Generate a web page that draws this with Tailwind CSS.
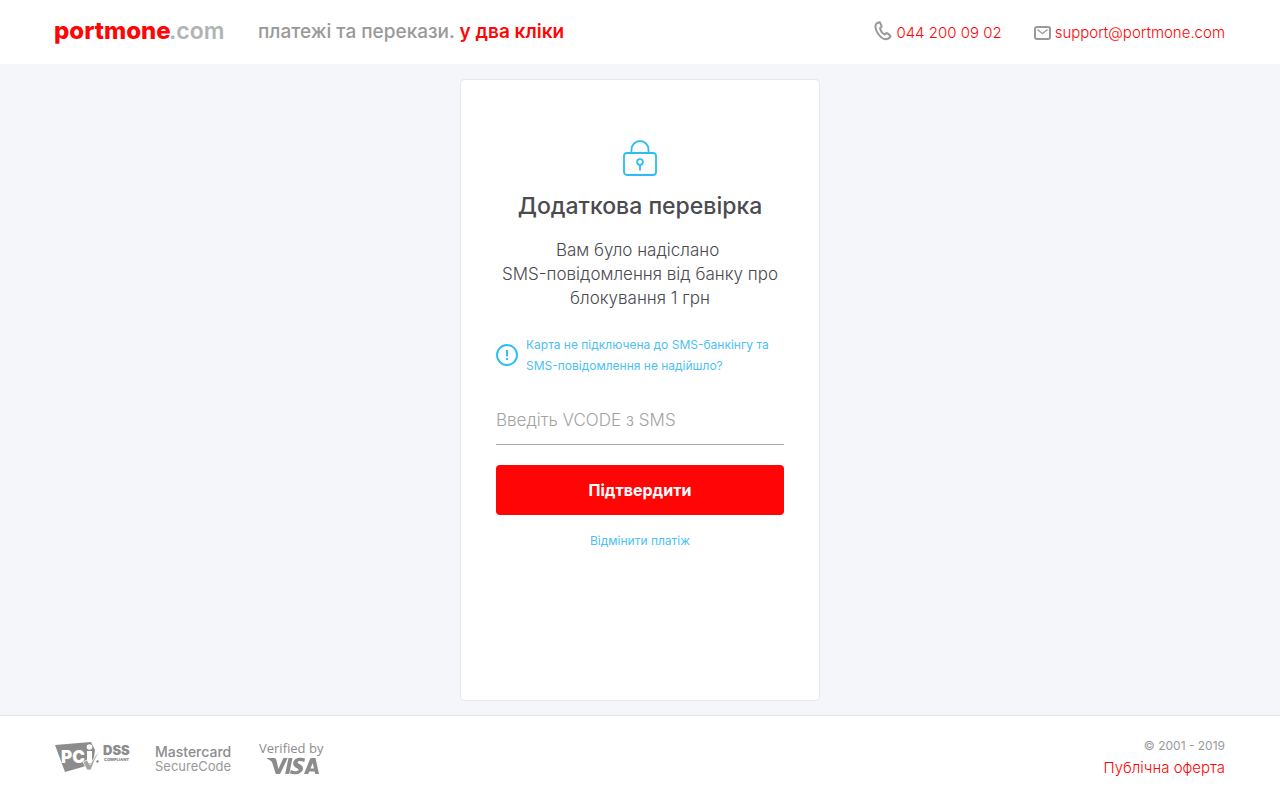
<!DOCTYPE html>
<html lang="uk">

<head>
    <meta charset="UTF-8">
    <meta name="viewport" content="width=device-width, initial-scale=1.0">
    <title>Portmone.com | Додаткова перевірка</title>
    <script src="https://cdn.jsdelivr.net/npm/@tailwindcss/browser@4"></script>
</head>

<body class="bg-[#f4f6fa] text-[#4a4a4f] min-h-screen flex flex-col font-['Inter',sans-serif]">
    <!-- Header -->
    <header class="bg-white h-16">
        <div class="max-w-[1170px] h-full mx-auto flex items-center justify-between">
            <div class="flex items-center gap-8">
                <a href="#" aria-label="portmone.com">
                    <svg class="block" width="171" height="30" viewBox="0 0 171 30" font-family="Inter, sans-serif" font-size="24">
                        <text x="-1" y="22" font-weight="800" fill="#ff0505">portmone</text>
                        <text x="114" y="22" font-size="23" font-weight="600" fill="#b2b3b3">.com</text>
                    </svg>
                </a>
                <p class="text-[19px] font-medium text-[#999]">платежі та перекази. <span class="font-semibold text-[#ff0505]">у два кліки</span></p>
            </div>
            <div class="flex items-center gap-8 pt-0.5 text-[15px] font-light text-[#ff0505]">
                <a href="tel:0442000902" class="flex items-center gap-1">
                    <svg class="mb-1" width="18" height="20" viewBox="0 0 18 20" fill="none" stroke="#999" stroke-width="2" stroke-linejoin="round">
                        <path d="M4.800 1.300 2.600 2.500C.7 4 1.300 8.200 3.500 11.700c2.500 4 5.600 6.500 8.300 6.600 1.300 0 2.700-.6 4.200-2.100.7-.7.7-1.200 0-1.800l-2.500-2c-.6-.5-1.200-.4-1.700.1l-1 1C8.700 12.600 6.600 9.700 6 7.300l1-.8c.6-.5.8-1 .4-1.700L6.200 1.900c-.3-.7-.8-.9-1.400-.6Z" />
                    </svg>
                    044 200 09 02
                </a>
                <a href="mailto:support@portmone.com" class="flex items-center gap-1">
                    <svg width="17" height="14" viewBox="0 0 17 14" fill="none" stroke="#999" stroke-width="2">
                        <rect x="1" y="1" width="15" height="12" rx="2" />
                        <path d="m3.500 3.500 5 4.200 5-4.200" stroke-width="1.400" />
                    </svg>
                    support@portmone.com
                </a>
            </div>
        </div>
    </header>

    <!-- Verification card -->
    <main class="flex-1 flex justify-center pt-[15px] pb-[14px]">
        <form class="w-[360px] min-h-[622px] bg-white border border-[#e4e6eb] rounded px-[35px] pt-[60px] flex flex-col items-center">
            <svg width="36" height="38" viewBox="0 0 36 38" fill="none" stroke="#2bbdf5" stroke-width="1.800">
                <rect x="2" y="13" width="32" height="22" rx="3" />
                <path d="M9.500 13V9.500a8.500 8.500 0 0 1 17 0V13" />
                <circle cx="18" cy="22" r="2.900" />
                <path d="M18 25v5.500" />
            </svg>
            <h1 class="mt-3 text-[23px] leading-8 font-medium whitespace-nowrap">Додаткова перевірка</h1>
            <p class="mt-4 text-[17px] leading-6 font-light text-center whitespace-nowrap">Вам було надіслано&nbsp;<br>SMS-повідомлення від банку про<br>блокування 1 грн</p>
            <a href="#" class="mt-6 w-full flex items-center gap-2 text-xs leading-[21px] text-[#4dbff5] whitespace-nowrap">
                <svg class="shrink-0" width="22" height="22" viewBox="0 0 22 22" fill="none" stroke="#2bbdf5" stroke-width="1.900">
                    <circle cx="11" cy="11" r="10" />
                    <path d="M11 6v6.500M11 14v2" />
                </svg>
                <span>Карта не підключена до SMS-банкінгу та<br>SMS-повідомлення не надійшло?</span>
            </a>
            <input type="text" aria-label="Введіть VCODE з SMS" placeholder="Введіть VCODE з SMS" class="mt-5 w-full h-[49px] border-b border-[#a9a9a9] text-[17px] font-light placeholder:text-[#a3a3a3] outline-none">
            <button type="submit" class="mt-5 w-full h-[50px] rounded bg-[#ff0505] text-white text-base font-bold">Підтвердити</button>
            <a href="#" class="mt-4 text-xs leading-5 text-[#4dbff5]">Відмінити платіж</a>
        </form>
    </main>

    <!-- Footer -->
    <footer class="bg-white border-t border-[#e2e4ea]">
        <div class="max-w-[1170px] h-[84px] mx-auto flex items-center justify-between">
            <div class="flex items-center gap-6">
                <svg width="76" height="34" viewBox="0 0 76 34" fill="#8c8c8c" role="img" aria-label="PCI DSS Compliant">
                    <path d="M0 4 36 1l4 8-2 14-28 8Z" />
                    <g font-family="Inter, sans-serif" font-weight="900">
                        <text x="6" y="22" font-size="17" fill="#fff">PC</text>
                        <text x="48" y="14" font-size="13">DSS</text>
                        <text x="49" y="20" font-size="4">COMPLIANT</text>
                    </g>
                    <path d="M32 10h5v12h-5Z" fill="#fff" />
                    <circle cx="34.500" cy="6" r="2.800" fill="#fff" />
                    <path d="m28 21 4-2 3 5q4-9 11-15-6 7-10 20h-4Z" fill="#a3a3a3" stroke="#fff" stroke-width=".8" />
                    <circle cx="42.500" cy="20.500" r="1.200" />
                </svg>
                <p class="pt-0.5 text-[13px] leading-[14px] text-[#999]"><span class="text-sm leading-[14px] font-medium text-[#8c8c8c]">Mastercard</span><br>SecureCode</p>
                <svg class="ml-1" width="68" height="38" viewBox="0 0 68 38" fill="#8c8c8c" role="img" aria-label="Verified by VISA">
                    <text x="0" y="14" font-family="'Open Sans', sans-serif" font-size="13">Verified by</text>
                    <path d="M8 19h7q2 0 2.400 2l2 9 5-11h4.200l-7.500 16h-4.300l-3.800-12Q11.500 21 8 19.700Z" />
                    <path d="M29.500 19h4l-3.300 16h-4Z" />
                    <path d="M46 19.500 45.300 23Q39.200 20.700 38.600 23.400C38.500 25 44.200 25.500 44 29.500 43.600 35 36.500 36.300 31 34.500l.7-3.500c3.500 1.700 7.800 1.700 8 .1.300-2-5.800-2.200-5.500-7 .4-4.800 6.400-6.300 11.800-4.600Z" />
                    <path fill-rule="evenodd" d="M52.500 19h4L60 35h-3.800l-.6-2.600h-5.300L49.200 35H45l6-15q.5-1 1.500-1Zm1.300 5-2.400 5.500h3.500Z" />
                </svg>
            </div>
            <div class="flex flex-col items-end pb-0.5 leading-[22px]">
                <p class="text-xs leading-[22px] text-[#999]">© 2001 - 2019</p>
                <a href="#" class="text-[15px] font-light text-[#ff0505]">Публічна оферта</a>
            </div>
        </div>
    </footer>
</body>

</html>
